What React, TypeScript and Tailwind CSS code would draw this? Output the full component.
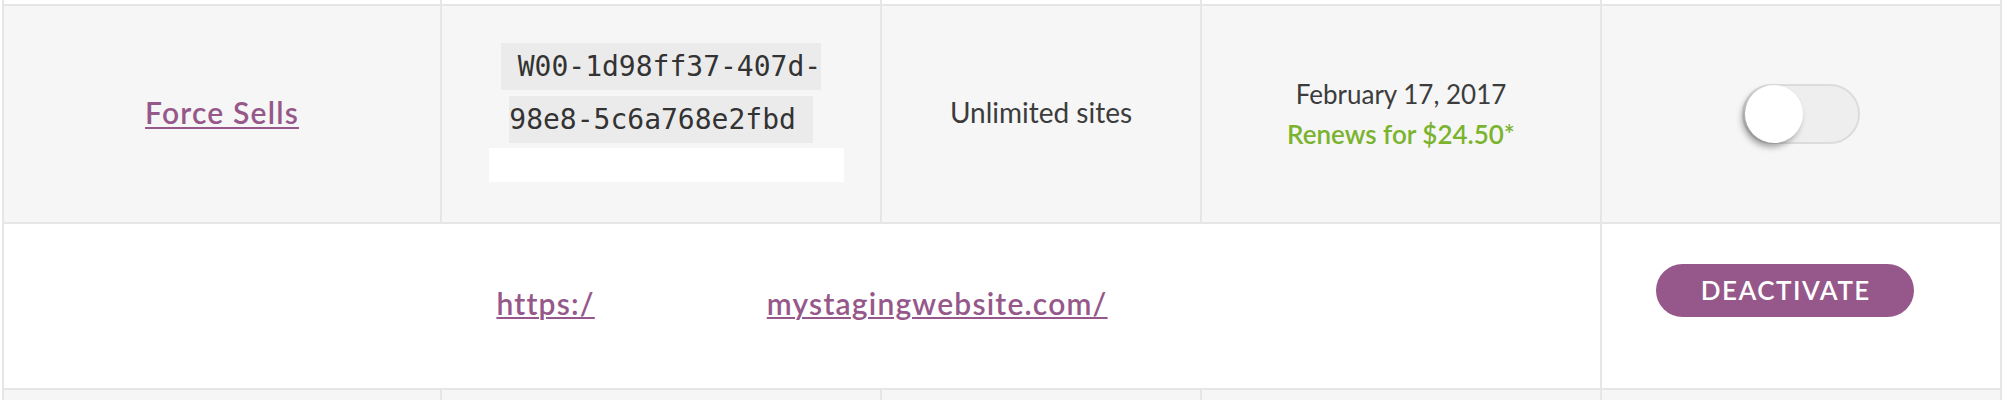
const line = 'border-r-2 border-[#e6e6e6]';

function ColumnStub({ bg, height }: { bg: string; height: string }) {
  return (
    <div className={`flex ${height} ${bg}`}>
      <div className={`w-[438px] ${line}`} />
      <div className={`w-[440px] ${line}`} />
      <div className={`w-[320px] ${line}`} />
      <div className={`w-[400px] ${line}`} />
      <div className="w-[398px]" />
    </div>
  );
}

export default function App() {
  return (
    <div className="min-h-screen bg-white font-[Lato,sans-serif] text-[#3c3c3c]">
      <div className="ml-[2px] w-[2000px] border-x-2 border-[#e6e6e6]">
        {/* tail of the row above */}
        <ColumnStub bg="bg-white" height="h-[4px]" />

        {/* subscription row */}
        <div className="flex h-[220px] border-y-2 border-[#e6e6e6] bg-[#f6f6f6]">
          <div className={`w-[438px] ${line} flex items-center justify-center pb-[4px]`}>
            <a href="#" className="text-[30px] font-semibold tracking-[1.2px] text-[#96588a] underline decoration-2 underline-offset-[3px]">
              Force Sells
            </a>
          </div>

          <div className={`w-[440px] ${line} flex flex-col items-center justify-center px-8`}>
            <div className="text-center leading-[50px]">
              <code className="bg-[#ebebeb] py-[7px] font-['DejaVu_Sans_Mono',monospace] text-[28px] text-[#333]">
                {'\u00a0W00-1d98ff37-407d-98e8-5c6a768e2fbd\u00a0'}
              </code>
            </div>
            <div className="mb-[4px] ml-[10px] h-[34px] w-[355px] bg-white" />
          </div>

          <div className={`w-[320px] ${line} flex items-center justify-center pb-[4px]`}>
            <span className="text-[28px]">Unlimited sites</span>
          </div>

          <div className={`w-[400px] ${line} flex flex-col items-center justify-center`}>
            <div className="text-[26px] leading-[40px]">February 17, 2017</div>
            <div className="text-[26px] font-semibold leading-[40px] text-[#7ab32e]">Renews for $24.50*</div>
          </div>

          <div className="flex w-[398px] items-center justify-center">
            <button className="flex h-[60px] w-[118px] items-center rounded-full border-2 border-[#dcdcdc] bg-[#eeeeee]">
              <span className="ml-[1px] h-[58px] w-[58px] rounded-full bg-white shadow-[-3px_4px_6px_rgba(0,0,0,0.35)]" />
            </button>
          </div>
        </div>

        {/* site row */}
        <div className="flex h-[166px] border-b-2 border-[#e6e6e6] bg-white">
          <div className={`w-[1598px] ${line} flex items-center justify-center pb-[5px]`}>
            <a href="#" className="text-[30px] font-semibold tracking-[1.2px] text-[#96588a] underline decoration-2 underline-offset-[2px]">
              <span>https:/</span>
              <span className="inline-block w-[172px]" />
              <span>mystagingwebsite.com/</span>
            </a>
          </div>
          <div className="w-[398px] pl-[54px] pt-[40px]">
            <button className="flex h-[53px] w-[258px] items-center justify-center rounded-full bg-[#96588a] pl-[1.5px] text-[26px] font-semibold uppercase tracking-[1.5px] text-white">
              Deactivate
            </button>
          </div>
        </div>

        {/* next subscription row */}
        <ColumnStub bg="bg-[#f6f6f6]" height="h-[10px]" />
      </div>
    </div>
  );
}
